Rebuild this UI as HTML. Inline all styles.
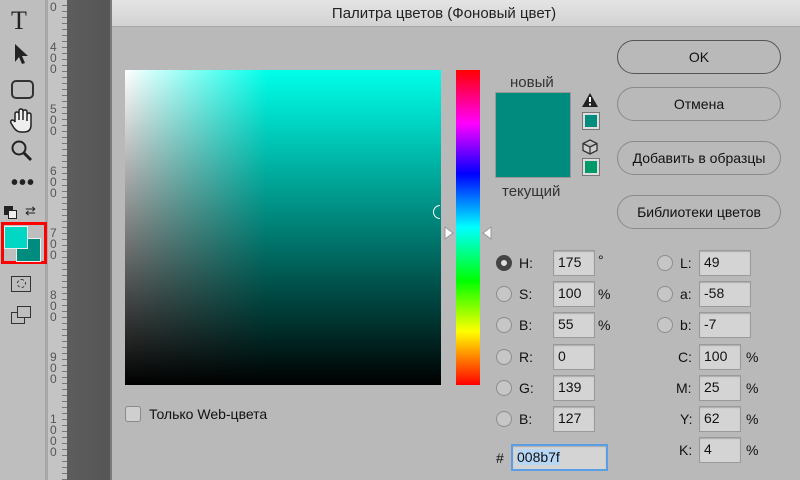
<!DOCTYPE html><html><head><meta charset="utf-8"><style>
body{margin:0;width:800px;height:480px;overflow:hidden;position:relative;background:#5c5c5c;font-family:"Liberation Sans",sans-serif;}
.a{position:absolute}
.inp{position:absolute;background:#d4d4d4;border:1px solid #9a9a9a;box-shadow:inset 0 1px 1px #aaa;height:22px;font-size:14px;line-height:23px;padding-left:4px;box-sizing:border-box;color:#111}
.rad{position:absolute;width:16px;height:16px;border-radius:50%;background:#c6c6c6;border:1px solid #8d8d8d;box-sizing:border-box}
.btn{position:absolute;left:617px;width:164px;height:34px;border:1px solid #8a8a8a;border-radius:17px;box-sizing:border-box;text-align:center;line-height:32px;font-size:14px;color:#111}
.lbl{position:absolute;font-size:14px;color:#111}
.rl{position:absolute;left:50px;font-size:12px;line-height:11px;color:#555;width:8px}
</style></head><body>
<div class="a" style="left:0;top:0;width:45px;height:480px;background:#bebebe"></div>
<div class="a" style="left:45px;top:0;width:3px;height:480px;background:#a8a8a8"></div>
<div class="a" style="left:48px;top:0;width:19px;height:480px;background:#c4c4c4"></div>
<div class="a" style="left:62px;top:0;width:5px;height:480px;background:repeating-linear-gradient(to bottom,#c4c4c4 0 5px,#777 5px 6px)"></div>
<div class="a" style="left:67px;top:0;width:43px;height:480px;background:linear-gradient(to right,#5d5d5d,#555)"></div>
<div class="rl" style="top:2px">0</div>
<div class="rl" style="top:42px">4<br>0<br>0</div>
<div class="rl" style="top:104px">5<br>0<br>0</div>
<div class="rl" style="top:166px">6<br>0<br>0</div>
<div class="rl" style="top:228px">7<br>0<br>0</div>
<div class="rl" style="top:290px">8<br>0<br>0</div>
<div class="rl" style="top:352px">9<br>0<br>0</div>
<div class="rl" style="top:414px">1<br>0<br>0<br>0</div>
<div class="a" style="left:11px;top:8px;font-size:26px;line-height:26px;font-family:'Liberation Serif',serif;color:#222">T</div>
<svg class="a" style="left:12px;top:42px" width="20" height="24"><path d="M3 2 L3 20 L7 15 L10 22 L13 21 L10 14 L16 14 Z" fill="#222"/></svg>
<div class="a" style="left:11px;top:80px;width:19px;height:15px;border:2px solid #333;border-radius:5px"></div>
<svg class="a" style="left:9px;top:108px" width="24" height="26"><path d="M6 14 L6 6 Q6 4 8 4 Q10 4 10 6 L10 12 L10 3 Q10 1 12 1 Q14 1 14 3 L14 12 L14 4 Q14 2 16 2 Q18 2 18 4 L18 13 L18 7 Q18 5 20 5 Q22 5 22 7 L22 17 Q22 24 15 24 L12 24 Q8 24 5 20 L2 15 Q1 13 3 12 Q5 12 6 14 Z" fill="#eee" stroke="#222" stroke-width="1.5"/></svg>
<svg class="a" style="left:10px;top:139px" width="24" height="24"><circle cx="9" cy="9" r="6.5" stroke="#222" stroke-width="2" fill="none"/><path d="M14 14 L21 21" stroke="#222" stroke-width="3"/></svg>
<div class="a" style="left:11px;top:172px;font-size:20px;font-weight:bold;color:#222;letter-spacing:1px">•••</div>
<div class="a" style="left:4px;top:206px;width:9px;height:9px;background:#222"></div>
<div class="a" style="left:8px;top:210px;width:7px;height:7px;border:1px solid #222;background:#eee"></div>
<div class="a" style="left:25px;top:203px;font-size:13px;color:#222">⇄</div>
<div class="a" style="left:1px;top:222px;width:46px;height:42px;border:3px solid #f00;box-sizing:border-box"></div>
<div class="a" style="left:16px;top:238px;width:23px;height:22px;background:#008b7f;border:1px solid #eee"></div>
<div class="a" style="left:4px;top:226px;width:22px;height:21px;background:#00d7c4;border:1px solid #eee"></div>
<div class="a" style="left:11px;top:276px;width:18px;height:14px;border:1.5px solid #333"><div style="margin:2px 5px;width:7px;height:7px;border:1px dashed #333;border-radius:50%"></div></div>
<div class="a" style="left:11px;top:312px;width:12px;height:10px;border:1.5px solid #333"></div>
<div class="a" style="left:17px;top:306px;width:12px;height:10px;border:1.5px solid #333;background:#bebebe"></div>
<div class="a" style="left:110px;top:0;width:690px;height:480px;background:#b9b9b9;border-left:2px solid #7c7c7c"></div>
<div class="a" style="left:112px;top:0;width:688px;height:26px;background:linear-gradient(#e4e4e4,#d2d2d2);border-bottom:1px solid #a8a8a8;text-align:center;font-size:15px;line-height:28px;color:#222"><span style="position:relative;left:-12px">Палитра цветов (Фоновый цвет)</span></div>
<div class="a" style="left:125px;top:70px;width:316px;height:315px;background:linear-gradient(to bottom,rgba(0,0,0,0),#000),linear-gradient(to right,#fff,#00ffea 45%,#00ffea)"></div>
<div class="a" style="left:433px;top:205px;width:14px;height:14px;border:1.5px solid #fff;border-radius:50%;box-sizing:border-box;clip-path:inset(0 50% 0 0)"></div>
<div class="a" style="left:456px;top:70px;width:24px;height:315px;background:linear-gradient(to bottom,#f00 0%,#f0f 17%,#00f 33%,#0ff 50%,#0f0 67%,#ff0 83%,#f00 100%)"></div>
<svg class="a" style="left:443px;top:226px" width="50" height="14"><path d="M2 1 L10 7 L2 13 Z" fill="#fff" stroke="#999"/><path d="M48 1 L40 7 L48 13 Z" fill="#fff" stroke="#999"/></svg>
<div class="lbl" style="left:510px;top:74px;font-size:15px;color:#333">новый</div>
<div class="a" style="left:495px;top:92px;width:76px;height:86px;background:#008b7f;border:1px solid #999;box-sizing:border-box"></div>
<div class="lbl" style="left:502px;top:183px;font-size:15px;color:#333">текущий</div>
<svg class="a" style="left:581px;top:92px" width="18" height="16"><path d="M9 1 L17 15 L1 15 Z" fill="#222"/><rect x="8" y="5" width="2" height="5" fill="#fff"/><rect x="8" y="11.5" width="2" height="2" fill="#fff"/></svg>
<div class="a" style="left:582px;top:112px;width:16px;height:16px;border:1px solid #777;background:#008b7f;box-shadow:inset 0 0 0 2px #ddd"></div>
<svg class="a" style="left:582px;top:139px" width="16" height="16"><path d="M8 1 L15 4.5 L15 11.5 L8 15 L1 11.5 L1 4.5 Z M1 4.5 L8 8 L15 4.5 M8 8 L8 15" fill="#ccc" stroke="#333" stroke-width="1.3"/></svg>
<div class="a" style="left:582px;top:158px;width:16px;height:16px;border:1px solid #777;background:#00996a;box-shadow:inset 0 0 0 2px #ddd"></div>
<div class="btn" style="top:40px;border-color:#555">OK</div>
<div class="btn" style="top:87px">Отмена</div>
<div class="btn" style="top:141px">Добавить в образцы</div>
<div class="btn" style="top:195px">Библиотеки цветов</div>
<div class="rad" style="left:496px;top:255px;border:5px solid #444;background:#ddd"></div>
<div class="rad" style="left:496px;top:286px"></div>
<div class="rad" style="left:496px;top:317px"></div>
<div class="rad" style="left:496px;top:349px"></div>
<div class="rad" style="left:496px;top:380px"></div>
<div class="rad" style="left:496px;top:411px"></div>
<div class="lbl" style="left:519px;top:255px">H:</div>
<div class="lbl" style="left:519px;top:286px">S:</div>
<div class="lbl" style="left:519px;top:317px">B:</div>
<div class="lbl" style="left:519px;top:349px">R:</div>
<div class="lbl" style="left:519px;top:380px">G:</div>
<div class="lbl" style="left:519px;top:411px">B:</div>
<div class="inp" style="left:553px;top:250px;width:42px;height:26px">175</div>
<div class="inp" style="left:553px;top:281px;width:42px;height:26px">100</div>
<div class="inp" style="left:553px;top:312px;width:42px;height:26px">55</div>
<div class="inp" style="left:553px;top:344px;width:42px;height:26px">0</div>
<div class="inp" style="left:553px;top:375px;width:42px;height:26px">139</div>
<div class="inp" style="left:553px;top:406px;width:42px;height:26px">127</div>
<div class="lbl" style="left:598px;top:252px">°</div>
<div class="lbl" style="left:598px;top:286px">%</div>
<div class="lbl" style="left:598px;top:317px">%</div>
<div class="lbl" style="left:496px;top:450px">#</div>
<div class="inp" style="left:511px;top:444px;width:97px;height:27px;border:2px solid #5b9ee6;background:#d4d4d4;line-height:23px"><span style="background:#b8d6f5">008b7f</span></div>
<div class="rad" style="left:657px;top:255px"></div>
<div class="rad" style="left:657px;top:286px"></div>
<div class="rad" style="left:657px;top:317px"></div>
<div class="lbl" style="left:680px;top:255px">L:</div>
<div class="lbl" style="left:680px;top:286px">a:</div>
<div class="lbl" style="left:680px;top:317px">b:</div>
<div class="inp" style="left:699px;top:250px;width:52px;height:26px">49</div>
<div class="inp" style="left:699px;top:281px;width:52px;height:26px">-58</div>
<div class="inp" style="left:699px;top:312px;width:52px;height:26px">-7</div>
<div class="lbl" style="left:678px;top:349px">C:</div>
<div class="lbl" style="left:676px;top:380px">M:</div>
<div class="lbl" style="left:680px;top:411px">Y:</div>
<div class="lbl" style="left:679px;top:442px">K:</div>
<div class="inp" style="left:699px;top:344px;width:42px;height:26px">100</div>
<div class="inp" style="left:699px;top:375px;width:42px;height:26px">25</div>
<div class="inp" style="left:699px;top:406px;width:42px;height:26px">62</div>
<div class="inp" style="left:699px;top:437px;width:42px;height:26px">4</div>
<div class="lbl" style="left:746px;top:349px">%</div>
<div class="lbl" style="left:746px;top:380px">%</div>
<div class="lbl" style="left:746px;top:411px">%</div>
<div class="lbl" style="left:746px;top:442px">%</div>
<div class="a" style="left:125px;top:406px;width:16px;height:16px;border:1px solid #8a8a8a;border-radius:3px;background:#cfcfcf;box-sizing:border-box"></div>
<div class="lbl" style="left:149px;top:406px">Только Web-цвета</div>
</body></html>
